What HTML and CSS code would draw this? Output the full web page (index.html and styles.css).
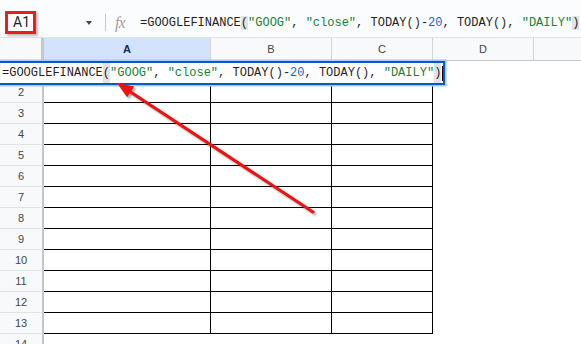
FILE: index.html
```html
<!DOCTYPE html>
<html>
<head>
<meta charset="utf-8">
<link rel="stylesheet" href="styles.css">
</head>
<body>
<div class="app">
  <div class="topbar">
    <div class="namebox">A1</div>
    <span class="caret"></span>
    <span class="sep"></span>
    <span class="fx">fx</span>
    <div class="formula"><span>=GOOGLEFINANCE</span><span class="hl">(</span><span class="str">"GOOG"</span>, <span class="str">"close"</span>, TODAY()-<span class="num">20</span>, TODAY(), <span class="str">"DAILY"</span><span class="hl">)</span></div>
  </div>
  <div class="sheet">
    <div class="ch corner"></div><div class="ch sel">A</div><div class="ch">B</div><div class="ch">C</div><div class="ch">D</div><div class="ch rest"></div>

    <div class="rh">1</div><div class="c b"></div><div class="c b"></div><div class="c b"></div><div class="c"></div><div class="c"></div>
    <div class="rh">2</div><div class="c b"></div><div class="c b"></div><div class="c b"></div><div class="c"></div><div class="c"></div>
    <div class="rh">3</div><div class="c b"></div><div class="c b"></div><div class="c b"></div><div class="c"></div><div class="c"></div>
    <div class="rh">4</div><div class="c b"></div><div class="c b"></div><div class="c b"></div><div class="c"></div><div class="c"></div>
    <div class="rh">5</div><div class="c b"></div><div class="c b"></div><div class="c b"></div><div class="c"></div><div class="c"></div>
    <div class="rh">6</div><div class="c b"></div><div class="c b"></div><div class="c b"></div><div class="c"></div><div class="c"></div>
    <div class="rh">7</div><div class="c b"></div><div class="c b"></div><div class="c b"></div><div class="c"></div><div class="c"></div>
    <div class="rh">8</div><div class="c b"></div><div class="c b"></div><div class="c b"></div><div class="c"></div><div class="c"></div>
    <div class="rh">9</div><div class="c b"></div><div class="c b"></div><div class="c b"></div><div class="c"></div><div class="c"></div>
    <div class="rh">10</div><div class="c b"></div><div class="c b"></div><div class="c b"></div><div class="c"></div><div class="c"></div>
    <div class="rh">11</div><div class="c b"></div><div class="c b"></div><div class="c b"></div><div class="c"></div><div class="c"></div>
    <div class="rh">12</div><div class="c b"></div><div class="c b"></div><div class="c b"></div><div class="c"></div><div class="c"></div>
    <div class="rh">13</div><div class="c b"></div><div class="c b"></div><div class="c b"></div><div class="c"></div><div class="c"></div>
    <div class="rh">14</div><div class="c"></div><div class="c"></div><div class="c"></div><div class="c"></div><div class="c"></div>

    <div class="editor"><span>=GOOGLEFINANCE</span><span class="hl">(</span><span class="str">"GOOG"</span>, <span class="str">"close"</span>, TODAY()-<span class="num">20</span>, TODAY(), <span class="str">"DAILY"</span><span class="hl">)</span><span class="cursor"></span></div>
  </div>
  <svg class="arrow" width="581" height="344" viewBox="0 0 581 344">
    <line x1="313" y1="212" x2="129" y2="91" stroke="#ee1111" stroke-width="3" stroke-linecap="round"/>
    <polygon points="117,83 127.1,97.3 134.2,86.5" fill="#ee1111"/>
  </svg>
</div>
</body>
</html>
```
FILE: styles.css
```css
html, body {
  margin: 0;
  padding: 0;
  background: #ffffff;
}
.app {
  position: relative;
  width: 581px;
  height: 344px;
  overflow: hidden;
  font-family: "Liberation Sans", Arial, sans-serif;
  color: #1f1f1f;
}
.topbar {
  height: 29px;
  padding-top: 8px;
  padding-left: 5px;
  display: flex;
  align-items: center;
  background: #fbfcfe;
  border-bottom: 1px solid #e1e3e1;
  white-space: nowrap;
}
.namebox {
  box-sizing: border-box;
  width: 31px;
  height: 23px;
  border: 3px solid #ec1c24;
  padding-left: 5px;
  font-family: Roboto, "Liberation Sans", sans-serif;
  font-size: 14px;
  line-height: 17px;
  color: #1f1f1f;
  box-shadow: 2px 2px 2px rgba(0, 0, 0, 0.25);
}
.caret {
  margin-left: 50px;
  width: 0;
  height: 0;
  border-left: 3.5px solid transparent;
  border-right: 3.5px solid transparent;
  border-top: 4px solid #444746;
}
.sep {
  margin-left: 13px;
  width: 1px;
  height: 17px;
  background: #c7c7c7;
}
.fx {
  margin-left: 9px;
  width: 15px;
  font-family: "Liberation Serif", serif;
  font-style: italic;
  font-size: 16px;
  color: #a0a0a0;
  letter-spacing: -1px;
}
.formula {
  margin-left: 10px;
  font-family: "Liberation Mono", "DejaVu Sans Mono", monospace;
  font-size: 12px;
  line-height: 16px;
  color: #1f1f1f;
  white-space: pre;
}
.str { color: #188038; }
.num { color: #1a5fd0; }
.hl { background: #e2e2e2; }

.sheet {
  position: relative;
  display: grid;
  grid-template-columns: 44px 167px 121px 101px 101px 1fr;
  grid-template-rows: 23px;
  grid-auto-rows: 21px;
}
.ch {
  box-sizing: border-box;
  background: #f8f9fa;
  border-right: 1px solid #d3d5d6;
  border-bottom: 1px solid #c4c7c5;
  font-size: 11px;
  line-height: 22px;
  text-align: center;
  color: #444746;
}
.ch.corner {
  border-right: 3px solid #c4c7c5;
}
.ch.sel {
  background: #d3e3fd;
  color: #0b2d5c;
  font-weight: bold;
}
.ch.rest {
  border-right: none;
}
.rh {
  box-sizing: border-box;
  background: #f8f9fa;
  border-right: 2px solid #c4c7c5;
  border-bottom: 1px solid #e1e3e1;
  font-size: 11px;
  line-height: 20px;
  text-align: center;
  color: #444746;
}
.c {
  box-sizing: border-box;
  background: #ffffff;
}
.c.b {
  border-right: 1px solid #000000;
  border-bottom: 1px solid #000000;
}
.editor {
  position: absolute;
  left: -4px;
  top: 23px;
  box-sizing: border-box;
  width: 449px;
  height: 24px;
  border: 2px solid #0b57d0;
  box-shadow: 0 0 0 1.5px #a8c7fa;
  background: #ffffff;
  padding-left: 4px;
  font-family: "Liberation Mono", "DejaVu Sans Mono", monospace;
  font-size: 12px;
  line-height: 20px;
  color: #1f1f1f;
  white-space: pre;
  display: flex;
  align-items: center;
}
.cursor {
  display: inline-block;
  width: 1px;
  height: 15px;
  background: #000000;
  margin-left: 1px;
}
.arrow {
  position: absolute;
  left: 0;
  top: 0;
  pointer-events: none;
  filter: drop-shadow(2px 2px 1px rgba(0, 0, 0, 0.35));
}
```
